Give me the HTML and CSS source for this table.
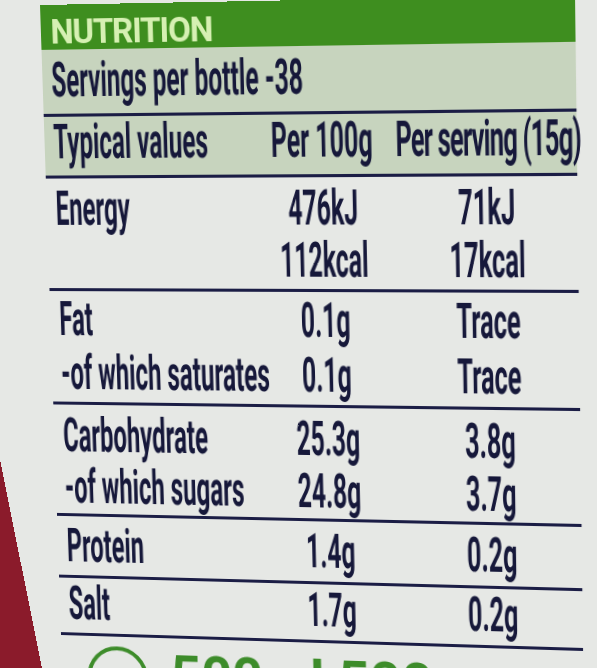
FILE: index.html
```html
<!DOCTYPE html>
<html>
<head>
    <title>Nutrition</title>
    <link rel="stylesheet" href="styles.css">
</head>
<body>
    <div class="label">
        <div class="head">NUTRITION</div>
        <div class="rows">
            <div class="row band serv">
                <div class="name">Servings per bottle -38</div>
            </div>
            <div class="row band typ">
                <div class="name">Typical values</div>
                <div class="val">Per 100g</div>
                <div class="val tight">Per serving (15g)</div>
            </div>
            <div class="row energy">
                <div class="name">Energy</div>
                <div class="val">476kJ<br>112kcal</div>
                <div class="val">71kJ<br>17kcal</div>
            </div>
            <div class="row fat">
                <div class="name">Fat<br>-of which saturates</div>
                <div class="val">0.1g<br>0.1g</div>
                <div class="val">Trace<br>Trace</div>
            </div>
            <div class="row carb">
                <div class="name">Carbohydrate<br>-of which sugars</div>
                <div class="val">25.3g<br>24.8g</div>
                <div class="val">3.8g<br>3.7g</div>
            </div>
            <div class="row prot">
                <div class="name">Protein</div>
                <div class="val">1.4g</div>
                <div class="val">0.2g</div>
            </div>
            <div class="row salt">
                <div class="name">Salt</div>
                <div class="val">1.7g</div>
                <div class="val">0.2g</div>
            </div>
        </div>
        <div class="foot">
            <span class="ring"></span>
            <span class="qty">500ml 500g</span>
        </div>
    </div>
</body>
</html>
```

FILE: styles.css
```css
html, body {
    margin: 0;
    padding: 0;
    overflow: hidden;
}

body {
    height: 668px;
    background: linear-gradient(to top right, #8b1b2b 50%, transparent 50%) 0 460px / 42px 208px no-repeat, #e6e8e5;
    font-family: Roboto, "Liberation Sans", sans-serif;
    color: #16183a;
}

/* the label is photographed at an angle: map the flat box onto it */
.label {
    width: 535px;
    margin: 5px 0 0 40px;
    transform-origin: 0 0;
    transform: matrix3d(0.959738, -0.017938, 0, -0.00007525, 0.034076, 1.022278, 0, 0.00004038, 0, 0, 1, 0, 0, 0, 0, 1);
}

.head {
    height: 44px;
    box-sizing: border-box;
    padding: 9px 0 0 10px;
    background-color: #3e8e1f;
    color: #d6f0b3;
    font-size: 34px;
    font-weight: bold;
    line-height: 34px;
    letter-spacing: -1.2px;
}

/* condensed type: laid out wide, squeezed back to 535px */
.rows {
    width: 1029px;
    transform-origin: 0 0;
    transform: scaleX(0.52);
    font-size: 48px;
    font-weight: bold;
    line-height: 45px;
}

.row {
    display: grid;
    grid-template-columns: 404px 284px 341px;
    box-sizing: border-box;
    border-bottom: 3px solid #1b1d45;
}

.band {
    background-color: #c7d4be;
}

.name {
    padding-left: 18px;
    white-space: nowrap;
}

.val {
    text-align: center;
    white-space: nowrap;
}

.tight {
    letter-spacing: -1.5px;
}

.serv {
    height: 66px;
    padding-top: 7px;
}

.serv .name {
    grid-column: 1 / 4;
}

.typ {
    height: 61px;
    padding-top: 2px;
}

.energy {
    height: 112px;
    padding-top: 4px;
    line-height: 51px;
}

.fat {
    height: 114px;
    padding-top: 1px;
    line-height: 54px;
}

.carb {
    height: 113px;
    padding-top: 5px;
    line-height: 52px;
}

.prot {
    height: 63px;
    padding-top: 7px;
}

.salt {
    height: 59px;
    padding-top: 3px;
}

.foot {
    display: flex;
    align-items: flex-start;
    padding: 10px 0 0 27px;
    color: #3d8c2a;
}

.ring {
    width: 56px;
    height: 56px;
    border: 4px solid #3d8c2a;
    border-radius: 50%;
}

.qty {
    margin-left: 24px;
    font-size: 56px;
    font-weight: bold;
    line-height: 56px;
}
```
